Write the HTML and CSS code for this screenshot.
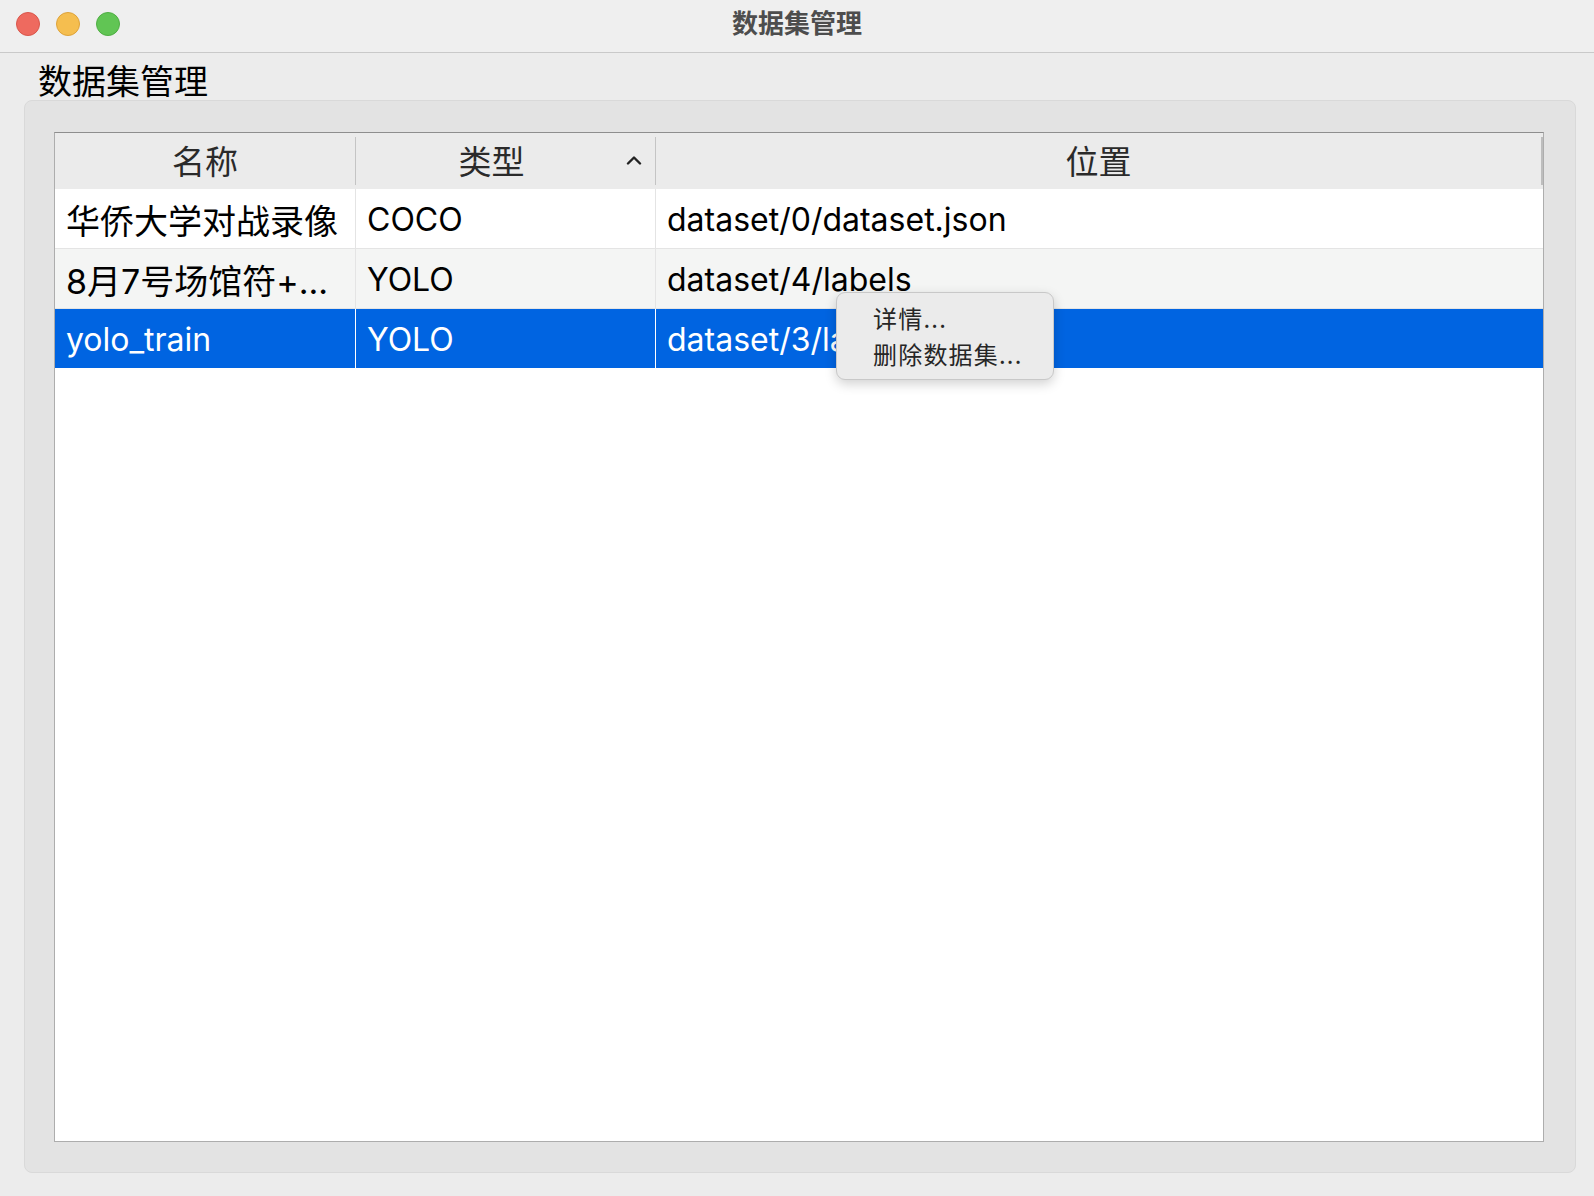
FILE: index.html
```html
<!DOCTYPE html>
<html lang="zh">
<head>
<meta charset="utf-8">
<title>数据集管理</title>
<link rel="stylesheet" href="styles.css">
</head>
<body>
<div class="window">
  <div class="titlebar">
    <div class="lights">
      <span class="light red"></span>
      <span class="light yellow"></span>
      <span class="light green"></span>
    </div>
    <div class="title">数据集管理</div>
  </div>
  <div class="content">
    <div class="group-title">数据集管理</div>
    <div class="group">
      <div class="table">
        <div class="thead">
          <div class="th c1">名称</div>
          <div class="hsep"></div>
          <div class="th c2 sorted">类型
            <svg class="sort" width="16" height="10" viewBox="0 0 16 10"><path d="M2 8.5 L8 2.5 L14 8.5" fill="none" stroke="#222" stroke-width="2.4" stroke-linecap="round" stroke-linejoin="round"/></svg>
          </div>
          <div class="hsep"></div>
          <div class="th c3">位置</div>
          <div class="hsep end"></div>
        </div>
        <div class="row">
          <div class="td c1">华侨大学对战录像</div>
          <div class="td c2"><span class="lat">COCO</span></div>
          <div class="td c3"><span class="lat">dataset/0/dataset.json</span></div>
        </div>
        <div class="row alt">
          <div class="td c1">8月7号场馆符+...</div>
          <div class="td c2"><span class="lat">YOLO</span></div>
          <div class="td c3"><span class="lat">dataset/4/labels</span></div>
        </div>
        <div class="row selected">
          <div class="td c1"><span class="lat">yolo_train</span></div>
          <div class="td c2"><span class="lat">YOLO</span></div>
          <div class="td c3"><span class="lat">dataset/3/labels</span></div>
        </div>
      </div>
    </div>
  </div>
</div>
<div class="menu">
  <div class="menu-item">详情...</div>
  <div class="menu-item">删除数据集...</div>
</div>
</body>
</html>
```
FILE: styles.css
```css
* { box-sizing: border-box; }
html, body { margin: 0; padding: 0; }
body {
  width: 1594px;
  height: 1196px;
  background: #ececec;
  font-family: "Inter", "Noto Sans CJK SC", sans-serif;
  position: relative;
  overflow: hidden;
}
.window { width: 1594px; height: 1196px; display: flex; flex-direction: column; }
.titlebar {
  height: 53px;
  flex: none;
  background: #efefef;
  border-bottom: 1px solid #c9c9c9;
  display: flex;
  align-items: center;
  position: relative;
}
.lights { display: flex; gap: 16px; padding-left: 16px; margin-top: -5px; }
.light { width: 24px; height: 24px; border-radius: 50%; display: block; }
.red { background: #ee6a5f; border: 1px solid #d9564b; }
.yellow { background: #f5be4f; border: 1px solid #dea33a; }
.green { background: #61c554; border: 1px solid #4fae43; }
.title {
  flex: 1;
  text-align: center;
  margin-left: -120px;
  font-family: "Noto Sans CJK SC", sans-serif;
  font-weight: 700;
  font-size: 26px;
  color: #4d4d4d;
  margin-top: -10px;
}
.content {
  flex: 1;
  display: flex;
  flex-direction: column;
  padding: 0 18px 23px 24px;
}
.group-title {
  font-family: "Noto Sans CJK SC", sans-serif;
  font-size: 34px;
  line-height: 37px;
  height: 47px;
  padding-top: 8px;
  padding-left: 14px;
  color: #000;
}
.group {
  flex: 1;
  background: #e3e3e3;
  border: 1px solid #d9d9d9;
  border-radius: 8px;
  padding: 31px 31px 30px 29px;
  display: flex;
  flex-direction: column;
}
.table {
  flex: 1;
  background: #fff;
  border: 1px solid #adadad;
  border-top-color: #8e8e8e;
}
.thead {
  height: 56px;
  background: #ebebeb;
  display: flex;
  align-items: center;
}
.th {
  height: 56px;
  display: flex;
  align-items: center;
  justify-content: center;
  font-family: "Noto Sans CJK SC", sans-serif;
  font-size: 33px;
  color: #2a2a2a;
  padding-bottom: 2px;
}
.th.c1 { width: 300px; }
.th.c2 { width: 299px; padding-right: 28px; position: relative; }
.th.c3 { flex: 1; }
.sort { position: absolute; right: 13px; top: 22px; }
.hsep { width: 1px; height: 48px; background: #c4c4c4; flex: none; }
.hsep.end { width: 2px; background: #bdbdbd; }
.row {
  height: 60px;
  display: flex;
  border-bottom: 1px solid #e4e4e4;
  background: #fff;
  color: #000;
}
.row.alt { background: #f4f5f4; }
.row.selected { background: #0064e1; color: #fff; border-bottom-color: #fff; }
.td {
  display: flex;
  align-items: center;
  padding-left: 11px;
  padding-top: 2px;
  font-size: 34px;
  white-space: nowrap;
  overflow: hidden;
}
.lat { font-size: 32px; }
.td.c1 { width: 301px; border-right: 1px solid #e4e4e4; }
.td.c2 { width: 300px; border-right: 1px solid #e4e4e4; }
.td.c3 { flex: 1; }
.row.selected .td.c1, .row.selected .td.c2 { border-right-color: #fff; }
.menu {
  position: absolute;
  left: 836px;
  top: 292px;
  width: 218px;
  height: 88px;
  background: #ebebeb;
  border: 1px solid #c8c8c8;
  border-radius: 9px;
  box-shadow: 0 4px 12px rgba(0,0,0,0.18);
  padding-top: 7px;
}
.menu-item {
  height: 36px;
  line-height: 36px;
  padding-left: 36px;
  font-family: "Noto Sans CJK SC", sans-serif;
  font-size: 24px;
  letter-spacing: 1.2px;
  color: #262626;
}
```
